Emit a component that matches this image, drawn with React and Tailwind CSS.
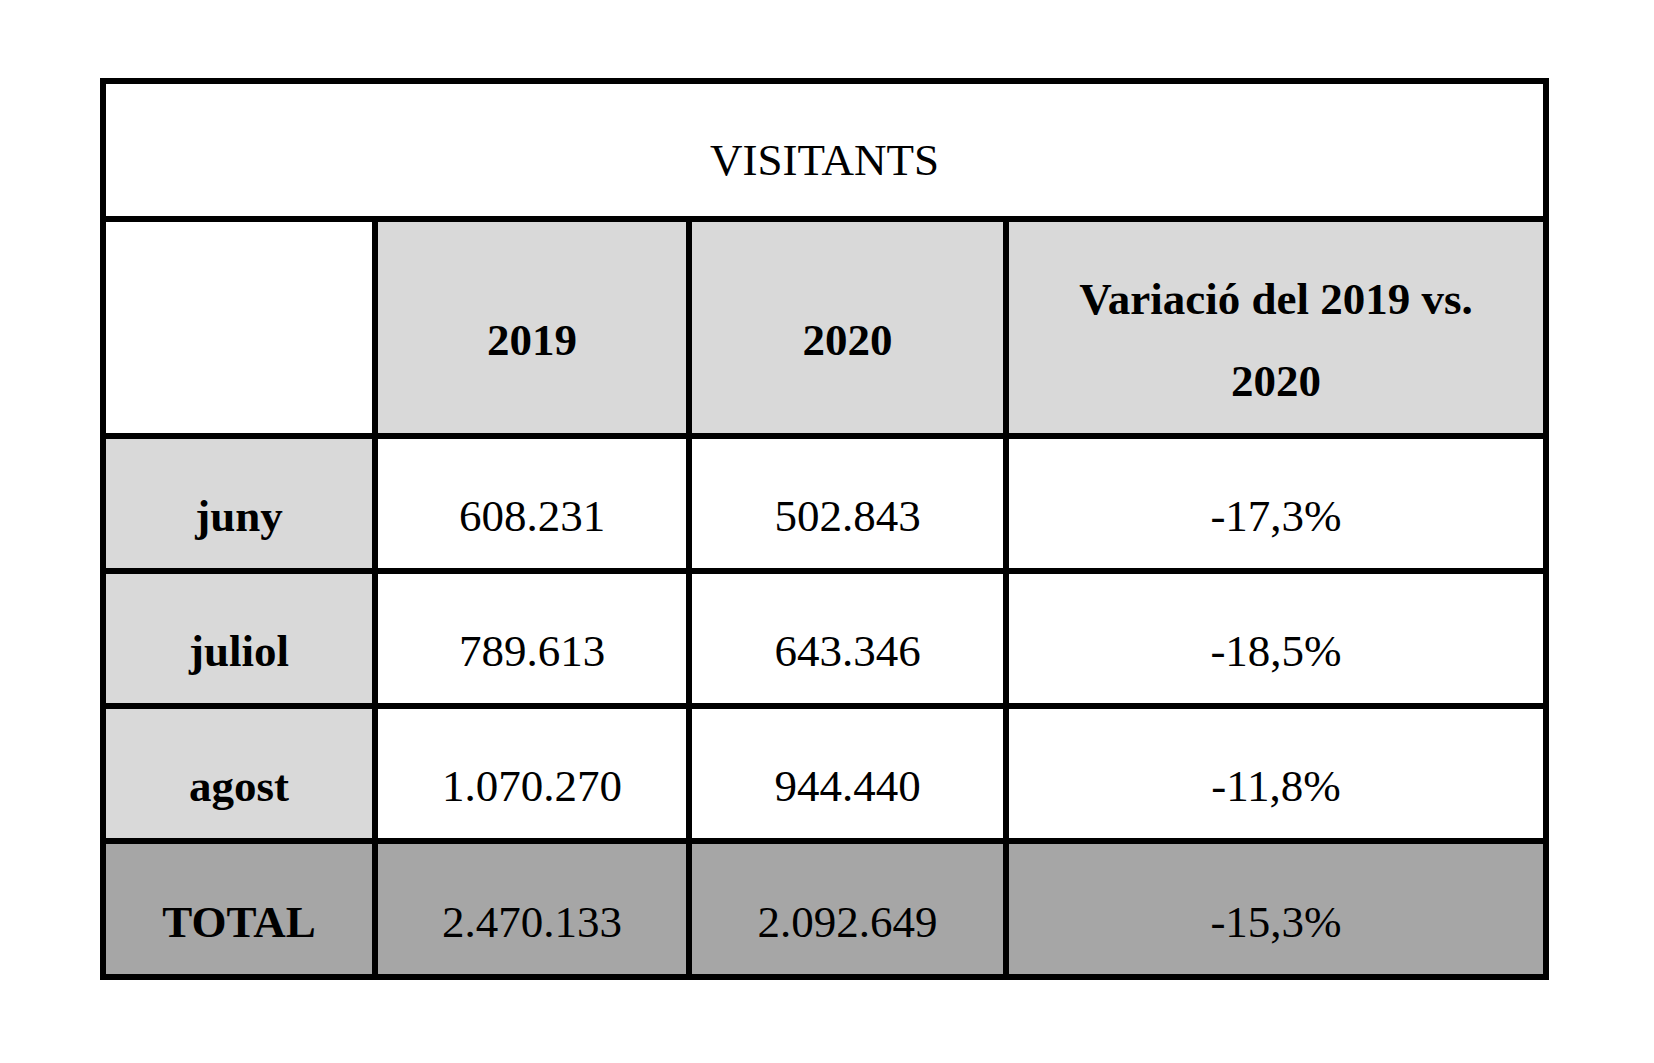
const rows = [
  { mes: 'juny', a: '608.231', b: '502.843', v: '-17,3%' },
  { mes: 'juliol', a: '789.613', b: '643.346', v: '-18,5%' },
  { mes: 'agost', a: '1.070.270', b: '944.440', v: '-11,8%' },
];

const cell = 'flex items-center justify-center text-center pt-[25px]';

function App() {
  return (
    <div className="min-h-screen bg-white pt-[78px] pl-[100px] font-['Liberation_Serif','Times_New_Roman',serif] text-[45px] text-black">
      <div className="grid w-max grid-cols-[266px_308px_311px_534px] grid-rows-[132px_211px_129px_129px_129px_130px] gap-[6px] bg-black p-[6px] leading-[82px]">
        <div className="col-span-4 flex items-center justify-center bg-white pt-[20px]">VISITANTS</div>

        <div className="bg-white" />
        <div className={`${cell} bg-[#d9d9d9] font-bold`}>2019</div>
        <div className={`${cell} bg-[#d9d9d9] font-bold`}>2020</div>
        <div className={`${cell} bg-[#d9d9d9] px-8 font-bold`}>Variació del 2019 vs. 2020</div>

        {rows.map((r) => (
          <div key={r.mes} className="contents">
            <div className={`${cell} bg-[#d9d9d9] font-bold`}>{r.mes}</div>
            <div className={`${cell} bg-white`}>{r.a}</div>
            <div className={`${cell} bg-white`}>{r.b}</div>
            <div className={`${cell} bg-white`}>{r.v}</div>
          </div>
        ))}

        <div className={`${cell} bg-[#a6a6a6] font-bold`}>TOTAL</div>
        <div className={`${cell} bg-[#a6a6a6]`}>2.470.133</div>
        <div className={`${cell} bg-[#a6a6a6]`}>2.092.649</div>
        <div className={`${cell} bg-[#a6a6a6]`}>-15,3%</div>
      </div>
    </div>
  );
}

export default App;
